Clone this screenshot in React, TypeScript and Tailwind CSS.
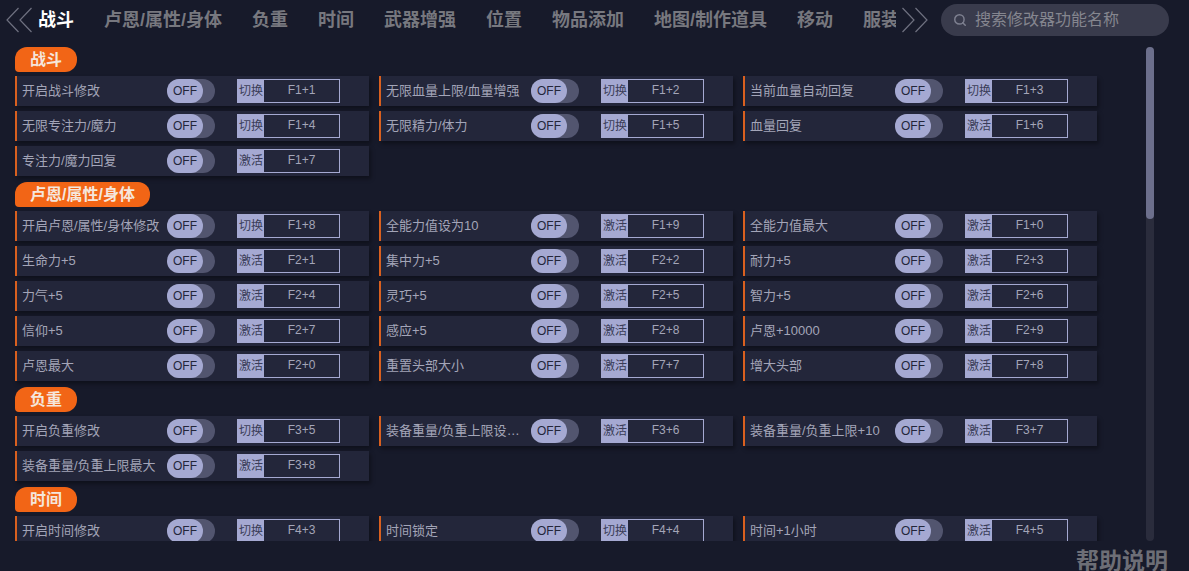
import { Search } from "lucide-react";

type Row = [string, string, string];

const tabs = ["战斗", "卢恩/属性/身体", "负重", "时间", "武器增强", "位置", "物品添加", "地图/制作道具", "移动", "服装"];

const sections: { title: string; rows: Row[] }[] = [
  {
    title: "战斗",
    rows: [
      ["开启战斗修改", "切换", "F1+1"],
      ["无限血量上限/血量增强", "切换", "F1+2"],
      ["当前血量自动回复", "切换", "F1+3"],
      ["无限专注力/魔力", "切换", "F1+4"],
      ["无限精力/体力", "切换", "F1+5"],
      ["血量回复", "激活", "F1+6"],
      ["专注力/魔力回复", "激活", "F1+7"],
    ],
  },
  {
    title: "卢恩/属性/身体",
    rows: [
      ["开启卢恩/属性/身体修改", "切换", "F1+8"],
      ["全能力值设为10", "激活", "F1+9"],
      ["全能力值最大", "激活", "F1+0"],
      ["生命力+5", "激活", "F2+1"],
      ["集中力+5", "激活", "F2+2"],
      ["耐力+5", "激活", "F2+3"],
      ["力气+5", "激活", "F2+4"],
      ["灵巧+5", "激活", "F2+5"],
      ["智力+5", "激活", "F2+6"],
      ["信仰+5", "激活", "F2+7"],
      ["感应+5", "激活", "F2+8"],
      ["卢恩+10000", "激活", "F2+9"],
      ["卢恩最大", "激活", "F2+0"],
      ["重置头部大小", "激活", "F7+7"],
      ["增大头部", "激活", "F7+8"],
    ],
  },
  {
    title: "负重",
    rows: [
      ["开启负重修改", "切换", "F3+5"],
      ["装备重量/负重上限设为最大值", "激活", "F3+6"],
      ["装备重量/负重上限+10", "激活", "F3+7"],
      ["装备重量/负重上限最大", "激活", "F3+8"],
    ],
  },
  {
    title: "时间",
    rows: [
      ["开启时间修改", "切换", "F4+3"],
      ["时间锁定", "切换", "F4+4"],
      ["时间+1小时", "激活", "F4+5"],
    ],
  },
];

function Chevrons({ flip }: { flip?: boolean }) {
  return (
    <svg width="27" height="26" viewBox="0 0 27 26" fill="none" stroke="#6f7180" strokeWidth="1.2" className={flip ? "shrink-0 rotate-180" : "shrink-0"}>
      <path d="M12.5 1 1 13l11.5 12" />
      <path d="M25.5 1 14 13l11.5 12" />
    </svg>
  );
}

function Cell({ row }: { row: Row }) {
  const [name, mode, key] = row;
  return (
    <div className="flex h-[30px] w-[354px] items-center border-l-2 border-[#d9601f] bg-[#23263a] shadow-[2px_3px_4px_rgba(0,0,0,0.35)]">
      <div className="w-[150px] shrink-0 truncate pl-[5px] text-[13px] text-[#a3a5b8]">{name}</div>
      <div className="flex h-6 w-12 shrink-0 rounded-full bg-[#52556f]">
        <div className="flex h-6 w-9 items-center justify-center rounded-full bg-[#a5a9d2] text-xs text-[#23263a]">OFF</div>
      </div>
      <div className="ml-[22px] flex h-6 w-[103px] shrink-0 border border-[#a5a9d2]">
        <div className="flex w-[26px] items-center justify-center bg-[#a5a9d2] text-xs whitespace-nowrap text-[#3a3d58]">{mode}</div>
        <div className="flex-1 text-center text-xs leading-[20px] text-[#a3a5b8]">{key}</div>
      </div>
    </div>
  );
}

export default function App() {
  return (
    <div
      className="h-[571px] w-[1189px] overflow-hidden bg-[#171a2a]"
      style={{ fontFamily: '"Liberation Sans", "Noto Sans CJK SC", sans-serif' }}
    >
      <header className="flex h-[47px] items-start">
        <div className="ml-1.5 mt-[7px] flex w-[922px] items-center gap-[5px]">
          <Chevrons />
          <div className="flex w-[863px] gap-[30px] overflow-hidden pl-0 text-lg leading-[26px] font-bold whitespace-nowrap text-[#77787f]">
            {tabs.map((t, i) => (
              <span key={t} className={i === 0 ? "text-white" : ""}>
                {t}
              </span>
            ))}
          </div>
          <Chevrons flip />
        </div>
        <div className="ml-[13px] mt-1 flex h-8 w-[228px] items-center gap-2 rounded-full bg-[#393b4c] pl-3 text-base text-[#85868f]">
          <Search size={14} strokeWidth={2.5} className="text-[#7e8090]" />
          <span>搜索修改器功能名称</span>
        </div>
      </header>

      <div className="flex h-[494px]">
        <div className="w-[1146px] overflow-hidden pl-[15px]">
          {sections.map((s) => (
            <section key={s.title} className="mb-1.5">
              <h2 className="mb-1 flex h-[25px] w-fit items-center rounded-t-xl rounded-br-xl rounded-bl-sm bg-[#f26516] px-[15px] text-base font-bold text-[#f5e6dc]">
                {s.title}
              </h2>
              <div className="grid grid-cols-[354px_354px_354px] gap-x-2.5 gap-y-[5px]">
                {s.rows.map((r) => (
                  <Cell key={r[2]} row={r} />
                ))}
              </div>
            </section>
          ))}
        </div>
        <div className="w-2 rounded-sm bg-[#2a2c3c]">
          <div className="h-[172px] rounded-sm bg-[#6c6f8c]"></div>
        </div>
      </div>

      <div className="mt-[7px] pr-[21px] text-right text-[23px] leading-[26px] font-bold text-[#6d6e76]">帮助说明</div>
    </div>
  );
}
